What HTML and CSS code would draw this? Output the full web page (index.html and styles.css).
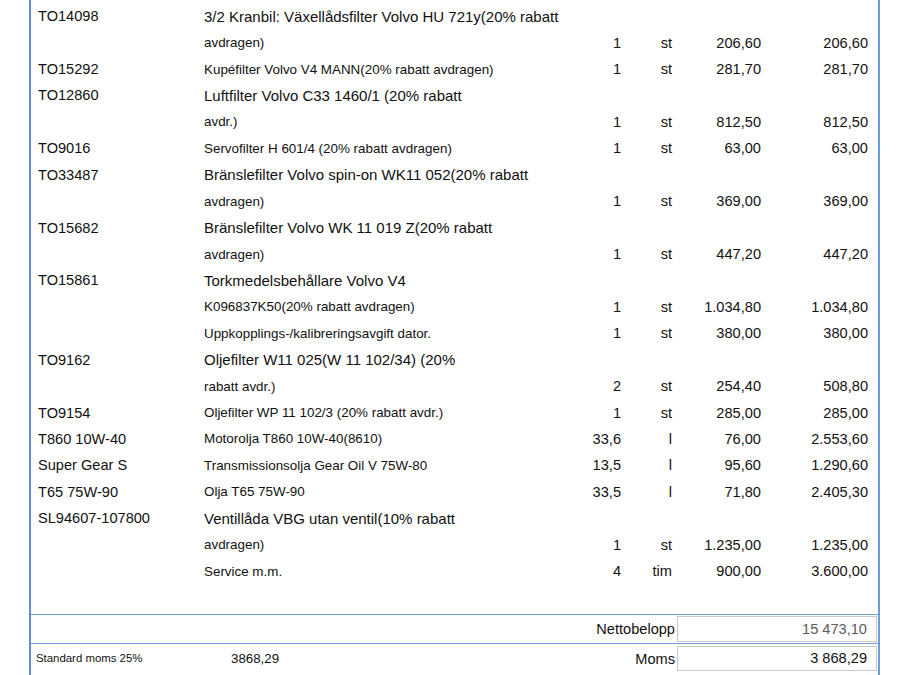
FILE: index.html
```html
<!DOCTYPE html>
<html lang="sv">
<head>
<meta charset="utf-8">
<title>Faktura rader</title>
<link rel="stylesheet" href="styles.css">
</head>
<body>
<div class="sheet">
  <div class="lines">
    <div class="line"><span class="code">TO14098</span><span class="desc big">3/2 Kranbil: Växellådsfilter Volvo HU 721y(20% rabatt</span><span class="qty"></span><span class="unit"></span><span class="price"></span><span class="total"></span></div>
    <div class="line"><span class="code"></span><span class="desc">avdragen)</span><span class="qty">1</span><span class="unit">st</span><span class="price">206,60</span><span class="total">206,60</span></div>
    <div class="line"><span class="code">TO15292</span><span class="desc">Kupéfilter Volvo V4 MANN(20% rabatt avdragen)</span><span class="qty">1</span><span class="unit">st</span><span class="price">281,70</span><span class="total">281,70</span></div>
    <div class="line"><span class="code">TO12860</span><span class="desc big">Luftfilter Volvo C33 1460/1 (20% rabatt</span><span class="qty"></span><span class="unit"></span><span class="price"></span><span class="total"></span></div>
    <div class="line"><span class="code"></span><span class="desc">avdr.)</span><span class="qty">1</span><span class="unit">st</span><span class="price">812,50</span><span class="total">812,50</span></div>
    <div class="line"><span class="code">TO9016</span><span class="desc">Servofilter H 601/4 (20% rabatt avdragen)</span><span class="qty">1</span><span class="unit">st</span><span class="price">63,00</span><span class="total">63,00</span></div>
    <div class="line"><span class="code">TO33487</span><span class="desc big">Bränslefilter Volvo spin-on WK11 052(20% rabatt</span><span class="qty"></span><span class="unit"></span><span class="price"></span><span class="total"></span></div>
    <div class="line"><span class="code"></span><span class="desc">avdragen)</span><span class="qty">1</span><span class="unit">st</span><span class="price">369,00</span><span class="total">369,00</span></div>
    <div class="line"><span class="code">TO15682</span><span class="desc big">Bränslefilter Volvo WK 11 019 Z(20% rabatt</span><span class="qty"></span><span class="unit"></span><span class="price"></span><span class="total"></span></div>
    <div class="line"><span class="code"></span><span class="desc">avdragen)</span><span class="qty">1</span><span class="unit">st</span><span class="price">447,20</span><span class="total">447,20</span></div>
    <div class="line"><span class="code">TO15861</span><span class="desc big">Torkmedelsbehållare Volvo V4</span><span class="qty"></span><span class="unit"></span><span class="price"></span><span class="total"></span></div>
    <div class="line"><span class="code"></span><span class="desc">K096837K50(20% rabatt avdragen)</span><span class="qty">1</span><span class="unit">st</span><span class="price">1.034,80</span><span class="total">1.034,80</span></div>
    <div class="line"><span class="code"></span><span class="desc">Uppkopplings-/kalibreringsavgift dator.</span><span class="qty">1</span><span class="unit">st</span><span class="price">380,00</span><span class="total">380,00</span></div>
    <div class="line"><span class="code">TO9162</span><span class="desc big">Oljefilter W11 025(W 11 102/34) (20%</span><span class="qty"></span><span class="unit"></span><span class="price"></span><span class="total"></span></div>
    <div class="line"><span class="code"></span><span class="desc">rabatt avdr.)</span><span class="qty">2</span><span class="unit">st</span><span class="price">254,40</span><span class="total">508,80</span></div>
    <div class="line"><span class="code">TO9154</span><span class="desc">Oljefilter WP 11 102/3 (20% rabatt avdr.)</span><span class="qty">1</span><span class="unit">st</span><span class="price">285,00</span><span class="total">285,00</span></div>
    <div class="line"><span class="code">T860 10W-40</span><span class="desc">Motorolja T860 10W-40(8610)</span><span class="qty">33,6</span><span class="unit">l</span><span class="price">76,00</span><span class="total">2.553,60</span></div>
    <div class="line"><span class="code">Super Gear S</span><span class="desc">Transmissionsolja Gear Oil V 75W-80</span><span class="qty">13,5</span><span class="unit">l</span><span class="price">95,60</span><span class="total">1.290,60</span></div>
    <div class="line"><span class="code">T65 75W-90</span><span class="desc">Olja T65 75W-90</span><span class="qty">33,5</span><span class="unit">l</span><span class="price">71,80</span><span class="total">2.405,30</span></div>
    <div class="line"><span class="code">SL94607-107800</span><span class="desc big">Ventillåda VBG utan ventil(10% rabatt</span><span class="qty"></span><span class="unit"></span><span class="price"></span><span class="total"></span></div>
    <div class="line"><span class="code"></span><span class="desc">avdragen)</span><span class="qty">1</span><span class="unit">st</span><span class="price">1.235,00</span><span class="total">1.235,00</span></div>
    <div class="line"><span class="code"></span><span class="desc">Service m.m.</span><span class="qty">4</span><span class="unit">tim</span><span class="price">900,00</span><span class="total">3.600,00</span></div>
  </div>
  <div class="sum sum-net">
    <span class="vat-name"></span>
    <span class="vat-amount"></span>
    <span class="sum-label">Nettobelopp</span>
    <span class="sum-box net-value">15 473,10</span>
  </div>
  <div class="sum sum-vat">
    <span class="vat-name">Standard moms 25%</span>
    <span class="vat-amount">3868,29</span>
    <span class="sum-label">Moms</span>
    <span class="sum-box">3 868,29</span>
  </div>
</div>
</body>
</html>
```

FILE: styles.css
```css
html, body {
  margin: 0;
  padding: 0;
  background: #ffffff;
}

body {
  font-family: "Liberation Sans", Arial, sans-serif;
  color: #111111;
  overflow: hidden;
}

.sheet {
  margin-left: 29px;
  width: 851px;
  height: 700px;
  box-sizing: border-box;
  border-left: 2px solid #5b8fd8;
  border-right: 2px solid #6b9be0;
}

.lines {
  padding-top: 3px;
  height: 615px;
  box-sizing: border-box;
  border-bottom: 1px solid #6d9de0;
}

.line {
  display: grid;
  grid-template-columns: 173px 366px 51px 51px 89px 107px;
  height: 26.43px;
  align-items: center;
  font-size: 14.6px;
  white-space: nowrap;
}

.code {
  padding-left: 7px;
}

.desc {
  font-size: 13.4px;
}

.desc.big {
  font-size: 15px;
}

.qty, .unit, .price, .total {
  text-align: right;
}

.sum {
  display: grid;
  grid-template-columns: 200px 286px 160px 200px;
  align-items: center;
}

.sum-net {
  height: 28px;
  border-bottom: 1px solid #6d9de0;
}

.sum-vat {
  height: 30px;
  padding-top: 2px;
  align-items: start;
}

.vat-name {
  padding-left: 5px;
  font-size: 11.4px;
  padding-top: 6px;
}

.vat-amount {
  font-size: 13.3px;
  padding-top: 5px;
}

.sum-label {
  text-align: right;
  font-size: 14.6px;
  padding-right: 2px;
}

.sum-vat .sum-label {
  padding-top: 5px;
}

.sum-box {
  box-sizing: border-box;
  height: 26px;
  border: 1px solid #c9c9c9;
  text-align: right;
  padding-right: 9px;
  font-size: 14.6px;
  line-height: 24px;
}

.sum-vat .sum-box {
  height: 25px;
  line-height: 23px;
}

.net-value {
  color: #5a5a5a;
}
```
